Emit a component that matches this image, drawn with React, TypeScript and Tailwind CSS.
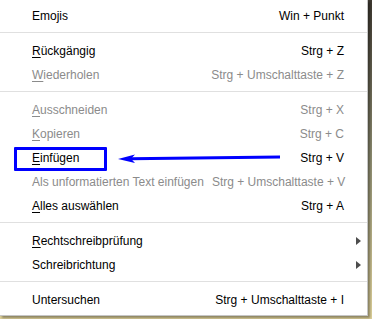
//컨텍스트 메뉴 (Bearbeiten) 화면 컴포넌트
import clsx from 'clsx';

type MenuItem = {
  label: string;
  accel?: boolean; //첫 글자 밑줄 여부
  shortcut?: string;
  disabled?: boolean;
  submenu?: boolean;
};

//메뉴 구분선 단위 목록
const sections: MenuItem[][] = [
  [{ label: 'Emojis', shortcut: 'Win + Punkt' }],
  [
    { label: 'Rückgängig', accel: true, shortcut: 'Strg + Z' },
    { label: 'Wiederholen', accel: true, shortcut: 'Strg + Umschalttaste + Z', disabled: true },
  ],
  [
    { label: 'Ausschneiden', accel: true, shortcut: 'Strg + X', disabled: true },
    { label: 'Kopieren', accel: true, shortcut: 'Strg + C', disabled: true },
    { label: 'Einfügen', accel: true, shortcut: 'Strg + V' },
    { label: 'Als unformatierten Text einfügen', shortcut: 'Strg + Umschalttaste + V', disabled: true },
    { label: 'Alles auswählen', accel: true, shortcut: 'Strg + A' },
  ],
  [
    { label: 'Rechtschreibprüfung', accel: true, submenu: true },
    { label: 'Schreibrichtung', submenu: true },
  ],
  [{ label: 'Untersuchen', shortcut: 'Strg + Umschalttaste + I' }],
];

const Row = ({ item }: { item: MenuItem }) => {
  return (
    <div
      className={clsx(
        'flex h-6 items-center pl-8 whitespace-nowrap',
        item.disabled ? 'text-[#8b8b8b]' : 'text-black',
      )}
    >
      <span className="flex-1">
        {item.accel ? (
          <>
            <span className="underline decoration-1 underline-offset-2">{item.label[0]}</span>
            {item.label.slice(1)}
          </>
        ) : (
          item.label
        )}
      </span>
      {item.shortcut && <span className="ml-2">{item.shortcut}</span>}
      <span className="flex w-[23px] pl-3">
        {item.submenu && (
          <span className="h-0 w-0 border-y-[4px] border-l-[5px] border-y-transparent border-l-[#4d4d4d]" />
        )}
      </span>
    </div>
  );
};

const App = () => {
  return (
    <div className="relative h-[319px] w-[372px] overflow-hidden bg-linear-to-b from-[#3d3830] via-[#8d8c70] to-[#dccf98] font-['Liberation_Sans',Arial,sans-serif] text-[12px]">
      {/* 메뉴 본체 */}
      <div className="w-[368px] border-r border-b border-[#c6c6c6] bg-white pt-1 pb-[3px] shadow-[2px_2px_2px_rgba(0,0,0,0.35)]">
        {sections.map((section, index) => (
          <div key={index}>
            {index > 0 && <div className="mt-1 mb-1.5 h-px bg-[#e0e0e0]" />}
            {section.map((item) => (
              <Row key={item.label} item={item} />
            ))}
          </div>
        ))}
      </div>

      {/* 강조 표시 박스와 화살표 */}
      <div className="absolute top-[147px] left-[14px] h-[24px] w-[93px] rounded-[1px] border-[3px] border-[#0000ff]" />
      <svg className="absolute top-0 left-0" width="372" height="319" viewBox="0 0 372 319">
        <line x1="280" y1="157" x2="130" y2="158.8" stroke="#0000ff" strokeWidth="3" />
        <polygon points="118,159 135,154.5 131,158.8 135,163" fill="#0000ff" />
      </svg>
    </div>
  );
};

export default App;
